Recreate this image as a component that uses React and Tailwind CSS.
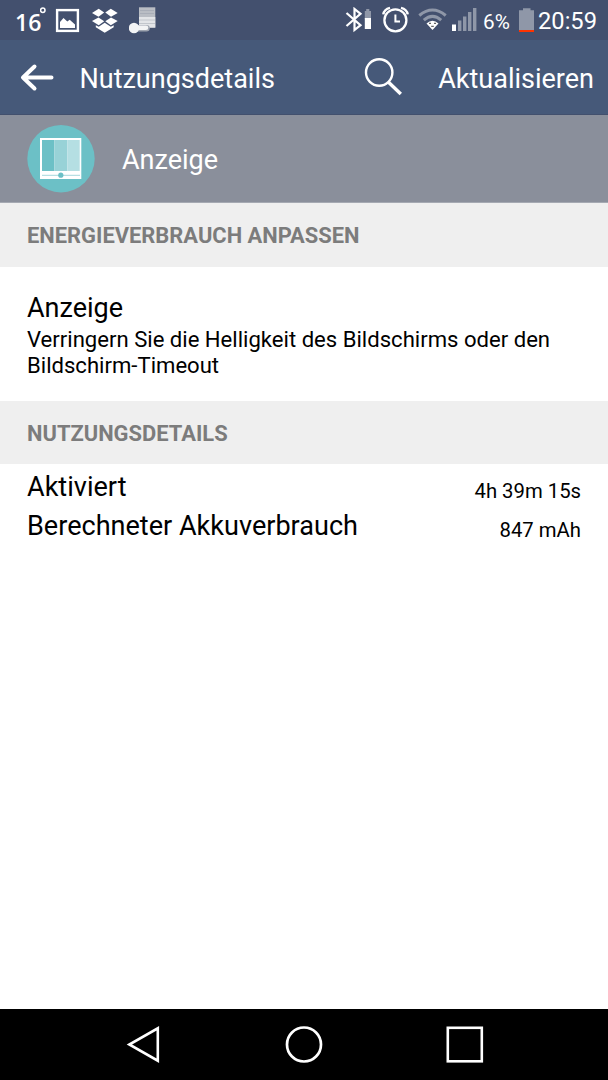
function DropboxIcon() {
  return (
    <svg className="ml-[11px] h-[26px] w-[28px]" viewBox="91 8 28 26" fill="#fff">
      <path d="M98.700 8.800 104.200 12.600 98.500 16.800 92 12.900Z" />
      <path d="M110.800 8.800 117.700 12.900 111 16.800 105.300 12.600Z" />
      <path d="M98.500 17.400 104.200 21.200 98.700 25.200 92 21.100Z" />
      <path d="M111 17.400 117.700 21.100 110.800 25.200 105.300 21.200Z" />
      <path d="M95.800 25.300 98.700 26.800 104.700 22.700 110.800 26.800 113.700 25.300V27.300L104.700 32.700 95.800 27.300Z" />
    </svg>
  )
}

function PictureIcon() {
  return (
    <svg className="ml-[7px] h-[25px] w-[25px]" viewBox="55 8 25 25">
      <rect x="57.100" y="10.100" width="20.800" height="20.800" fill="none" stroke="#fff" strokeWidth="2.400" />
      <path d="M60 28V22L63.500 18 67.300 21.600 69.700 19.700 75 24.500V28Z" fill="#fff" />
    </svg>
  )
}

function NoteIcon() {
  return (
    <svg className="ml-[10px] h-[28px] w-[28px]" viewBox="129 7 28 28">
      <rect x="139" y="7.300" width="16.300" height="20.500" fill="#b9bdc4" />
      <path d="M140 10.500H154M140 13.500H154" stroke="#a9aeb8" strokeWidth="1" />
      <rect x="139" y="17" width="16.300" height="10.500" fill="#e3e5e8" />
      <path d="M139 20H155M139 23.500H155" stroke="#c2c6cc" strokeWidth="1" />
      <path d="M134 28.200H146.500" stroke="#9fa5b0" strokeWidth="6.500" strokeLinecap="round" />
      <circle cx="134" cy="28" r="5.200" fill="#f3f4f5" />
      <path d="M134 27.800H146" stroke="#f3f4f5" strokeWidth="4.600" strokeLinecap="round" />
    </svg>
  )
}

function BluetoothIcon() {
  return (
    <svg className="h-[26px] w-[28px]" viewBox="345 8 28 26">
      <path d="M346.500 14 360.500 26.200 354.500 31V10L360.500 14.800 346.500 27" fill="none" stroke="#fff" strokeWidth="2.200" />
      <path d="M366.200 10H369.300V12H371V20H364.800V12H366.200Z" fill="#8f97a8" />
      <rect x="364.800" y="19" width="6.200" height="11" fill="#fff" />
    </svg>
  )
}

function AlarmIcon() {
  return (
    <svg className="ml-[9px] h-[27px] w-[28px]" viewBox="382 7 28 27" fill="none" stroke="#fff">
      <circle cx="395.400" cy="21.300" r="11" strokeWidth="2.300" />
      <path d="M395.400 15.500V22.500H400" strokeWidth="2" />
      <path d="M383.300 15.400C383.800 12 386 9.700 390 8.800M407.700 15.400C407.200 12 405 9.700 401 8.800" strokeWidth="2.400" />
    </svg>
  )
}

function WifiIcon() {
  return (
    <svg className="ml-[8px] h-[24px] w-[30px]" viewBox="418 8 30 24" fill="none">
      <path d="M419.300 15.500Q432.500 4.500 445.700 15.500" stroke="#8f97a8" strokeWidth="3" />
      <path d="M423.800 20.200Q432.500 12.500 441.200 20.200" stroke="#8f97a8" strokeWidth="3" />
      <path d="M426.500 23.500Q432.500 18 438.500 23.500L432.500 30Z" fill="#fff" />
      <path d="M429 23.300H431M434 23.300H436M431.200 26.300H433.800" stroke="#666" strokeWidth="1.200" />
    </svg>
  )
}

function SignalIcon() {
  return (
    <svg className="ml-[3px] h-[25px] w-[27px]" viewBox="451 8 27 25" fill="#8f97a8">
      <rect x="452" y="25.500" width="4" height="6.500" fill="#fff" />
      <rect x="458" y="21.500" width="3.400" height="10.500" />
      <rect x="463" y="17.500" width="3.400" height="14.500" />
      <rect x="468" y="13" width="3.400" height="19" />
      <rect x="473" y="9" width="3.400" height="23" />
    </svg>
  )
}

function BatteryIcon() {
  return (
    <svg className="h-[24px] w-[16px]" viewBox="519 8 16 24">
      <path d="M523 8.300H530.500V10.300H534V30H519V10.300H523Z" fill="#8f97a8" />
      <rect x="519" y="30" width="15" height="2" fill="#ff3300" />
    </svg>
  )
}

function StatusBar() {
  return (
    <div className="flex h-[40px] items-center justify-between bg-[#43506e] pr-[12px] pl-[15px] text-white">
      <div className="flex items-center pt-[1px]">
        <div className="flex items-start">
          <span className="mt-[2px] w-[25px] font-['Open_Sans'] text-[23px] leading-[38px] font-semibold">16</span>
          <svg className="mt-[5px] h-[8px] w-[8px]" viewBox="0 0 8 8">
            <circle cx="2.800" cy="4.300" r="2.200" fill="none" stroke="#fff" strokeWidth="1.500" />
          </svg>
        </div>
        <PictureIcon />
        <DropboxIcon />
        <NoteIcon />
      </div>
      <div className="flex items-center">
        <BluetoothIcon />
        <AlarmIcon />
        <WifiIcon />
        <SignalIcon />
        <span className="ml-[5px] w-[36px] pt-[4px] text-[20.700px]">6%</span>
        <BatteryIcon />
        <span className="ml-[3px] w-[58px] pt-[4px] text-[23.700px] whitespace-nowrap">20:59</span>
      </div>
    </div>
  )
}

function AppBar() {
  return (
    <div className="flex h-[75px] items-center border-b border-[#42506d] bg-[#465979] text-[27px] text-white">
      <svg className="ml-[19px] h-[30px] w-[36px]" viewBox="20 62 36 30" fill="none" stroke="#fff" strokeWidth="4" strokeLinecap="round" strokeLinejoin="round">
        <path d="M52.500 77.500H24M35.500 66.500 24 77.500 35.500 88.500" />
      </svg>
      <h1 className="ml-[24.500px] pt-[5px]">Nutzungsdetails</h1>
      <svg className="ml-auto h-[40px] w-[40px]" viewBox="363 57 40 40" fill="none" stroke="#fff">
        <circle cx="379.200" cy="72.500" r="13.200" strokeWidth="2.400" />
        <path d="M388.300 82 400.800 94" strokeWidth="3.400" />
      </svg>
      <button className="mr-[14px] ml-[35px] pt-[5px]">Aktualisieren</button>
    </div>
  )
}

function DisplayIcon() {
  return (
    <svg className="h-[68px] w-[68px]" viewBox="27 125 68 68">
      <circle cx="61" cy="158.700" r="33.700" fill="#6cc0c6" />
      <rect x="40" y="138" width="41.300" height="41" fill="#fff" />
      <rect x="42" y="140" width="12.300" height="31" fill="#6cc0c6" />
      <rect x="54.300" y="140" width="13" height="31" fill="#98d2d7" />
      <rect x="67.300" y="140" width="12.400" height="31" fill="#b5dfe3" />
      <path d="M42 175.300H80" stroke="#a5d8dc" strokeWidth="1" />
      <circle cx="60.800" cy="175.200" r="2.600" fill="#6cc0c6" />
    </svg>
  )
}

function SectionHeader({ children }) {
  return (
    <h2 className="flex h-[63.500px] items-center bg-[#efefef] pt-[3px] pl-[27px] text-[21.900px] font-bold text-[#7c7c7c]">
      {children}
    </h2>
  )
}

function DetailRow({ label, value }) {
  return (
    <div className="flex h-[39px] items-center justify-between pr-[27px] pl-[27px]">
      <span className="text-[27.070px]">{label}</span>
      <span className="pt-[7px] text-[20.300px]">{value}</span>
    </div>
  )
}

function NavBar() {
  return (
    <div className="mt-auto flex h-[71px] items-center bg-black pl-[126px]">
      <svg className="h-[40px] w-[34px]" viewBox="126 1025 34 40" fill="none" stroke="#fff" strokeWidth="2.600">
        <path d="M157.800 1028.300V1060.700L129.300 1044.500Z" />
      </svg>
      <svg className="ml-[124px] h-[40px] w-[40px]" viewBox="284 1025 40 40" fill="none" stroke="#fff" strokeWidth="2.700">
        <circle cx="304" cy="1044.500" r="17" />
      </svg>
      <svg className="ml-[122px] h-[40px] w-[38px]" viewBox="446 1025 38 40" fill="none" stroke="#fff" strokeWidth="2.600">
        <rect x="447.800" y="1027.800" width="34" height="33.500" />
      </svg>
    </div>
  )
}

export default function App() {
  return (
    <div className="flex h-[1080px] w-[608px] flex-col overflow-hidden bg-white font-[Roboto,sans-serif] leading-none text-black">
      <StatusBar />
      <AppBar />
      <div className="flex h-[88px] items-center border-b border-[#a5a9b2] bg-[#8a8f9b] pl-[27px] text-white">
        <DisplayIcon />
        <span className="ml-[27px] pt-[3px] text-[27px]">Anzeige</span>
      </div>
      <SectionHeader>ENERGIEVERBRAUCH ANPASSEN</SectionHeader>
      <div className="h-[134px] px-[27px] pt-[28px]">
        <h3 className="text-[27px]">Anzeige</h3>
        <p className="mt-[4px] text-[22.100px] leading-[26px]">
          Verringern Sie die Helligkeit des Bildschirms oder den Bildschirm-Timeout
        </p>
      </div>
      <SectionHeader>NUTZUNGSDETAILS</SectionHeader>
      <div className="pt-[4px]">
        <DetailRow label="Aktiviert" value="4h 39m 15s" />
        <DetailRow label="Berechneter Akkuverbrauch" value="847 mAh" />
      </div>
      <NavBar />
    </div>
  )
}
